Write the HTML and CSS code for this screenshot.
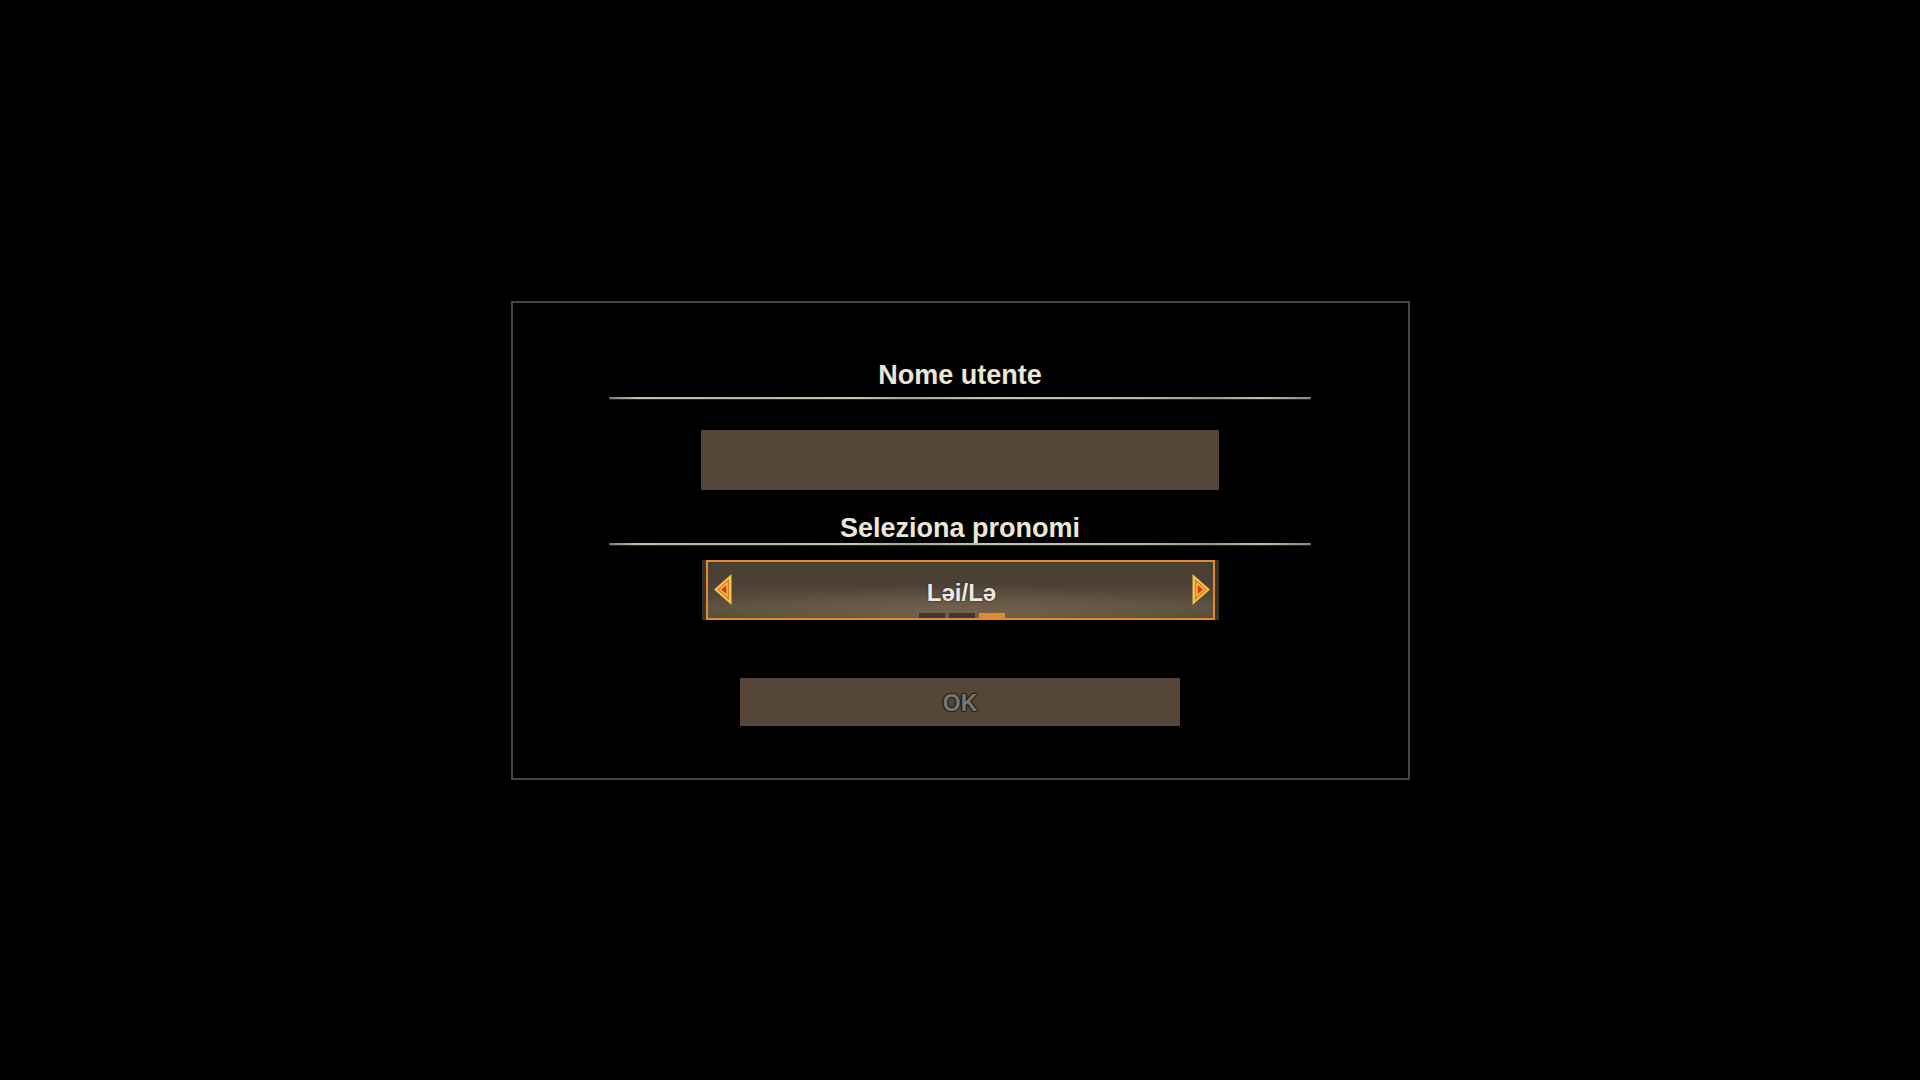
FILE: index.html
```html
<!DOCTYPE html>
<html lang="it">
<head>
<meta charset="utf-8">
<title>Nome utente</title>
<link rel="stylesheet" href="styles.css">
</head>
<body>
<main class="screen">
  <section class="panel">
    <h2 class="title title-name">Nome utente</h2>
    <div class="divider divider-name"></div>
    <div class="name-input" role="textbox" aria-label="Nome utente"></div>

    <h2 class="title title-pron">Seleziona pronomi</h2>
    <div class="divider divider-pron"></div>
    <div class="selector">
      <div class="selector-inner">
        <svg class="arrow" width="18" height="31" viewBox="0 0 18 31" aria-hidden="true">
          <polygon points="0,15.5 17.5,0 17.5,31" fill="#f2c348"/>
          <polygon points="3.2,15.5 15,5 15,26" fill="#e8742a"/>
          <polygon points="6,15.5 13,9.5 13,21.5" fill="#d63c18" stroke="#f5c850" stroke-width="1.3"/>
        </svg>
        <div class="selector-center">
          <span class="selector-label">Ləi/Lə</span>
          <div class="pager">
            <span class="pager-dot"></span>
            <span class="pager-dot"></span>
            <span class="pager-dot is-active"></span>
          </div>
        </div>
        <svg class="arrow" width="18" height="31" viewBox="0 0 18 31" aria-hidden="true">
          <polygon points="18,15.5 0.5,0 0.5,31" fill="#f2c348"/>
          <polygon points="14.8,15.5 3,5 3,26" fill="#e8742a"/>
          <polygon points="12,15.5 5,9.5 5,21.5" fill="#d63c18" stroke="#f5c850" stroke-width="1.3"/>
        </svg>
      </div>
    </div>

    <button class="ok-button" type="button">OK</button>
  </section>
</main>
</body>
</html>
```
FILE: styles.css
```css
html, body {
  margin: 0;
  padding: 0;
  background: #000;
}

body {
  font-family: "Liberation Sans", Arial, sans-serif;
}

.screen {
  width: 1920px;
  height: 1080px;
  display: flex;
  align-items: center;
  justify-content: center;
}

.panel {
  box-sizing: border-box;
  width: 899px;
  height: 479px;
  border: 2px solid #4a453a;
  background: #000;
  display: flex;
  flex-direction: column;
  align-items: center;
  padding: 58px 0 52px;
}

.title {
  margin: 0;
  font-size: 27px;
  line-height: 28px;
  font-weight: 700;
  color: #ebe7d8;
  text-align: center;
  text-shadow: 0 0 2px rgba(0, 0, 0, 0.8);
}

.divider {
  width: 702px;
  height: 2px;
  background: linear-gradient(90deg, #7f7c70 0%, #c4c0ad 4%, #b9b5a2 20%, #cbc7b3 35%, #a9a594 42%, #c8c4b1 55%, #bcb8a5 75%, #9e9a8a 86%, #c3bfac 93%, #87847a 100%);
  border-radius: 1px;
  box-shadow: 0 1px 1px rgba(120, 115, 100, 0.35);
}

.divider-name {
  margin-top: 8px;
}

.divider-pron {
  margin-top: 1px;
}

.name-input {
  margin-top: 31px;
  width: 518px;
  height: 60px;
  background: #554637;
}

.title-pron {
  margin-top: 24px;
}

.selector {
  box-sizing: border-box;
  margin-top: 15px;
  width: 517px;
  height: 60px;
  padding: 0 4px 0 4px;
  background: #3a3128;
}

.selector-inner {
  box-sizing: border-box;
  height: 100%;
  border: 2px solid #e38a2e;
  background:
    radial-gradient(ellipse 60% 55% at 50% 95%, rgba(140, 120, 95, 0.5), rgba(140, 120, 95, 0) 100%),
    linear-gradient(180deg, #483e32 0%, #4c4134 40%, #5d503f 80%, #56493a 100%);
  display: grid;
  grid-template-columns: auto 1fr auto;
  align-items: center;
  padding: 0 3px 0 6px;
}

.arrow {
  display: block;
}

.selector-center {
  align-self: stretch;
  display: flex;
  flex-direction: column;
  align-items: center;
  justify-content: flex-end;
}

.selector-label {
  font-size: 24px;
  line-height: 24px;
  font-weight: 700;
  color: #ede9e0;
  text-shadow: 0 0 2px rgba(0, 0, 0, 0.7);
}

.pager {
  display: flex;
  gap: 4px;
  margin-top: 8px;
}

.pager-dot {
  width: 26px;
  height: 5px;
  background: #393836;
}

.pager-dot.is-active {
  background: #e08a32;
}

.ok-button {
  margin-top: 58px;
  width: 440px;
  height: 48px;
  border: 0;
  padding: 4px 0 0;
  background: #554638;
  font-family: "Liberation Sans", Arial, sans-serif;
  font-size: 23px;
  font-weight: 700;
  color: #7b776d;
  text-shadow: 0 0 1px #1e1b17, 1px 0 1px #1e1b17, -1px 0 1px #1e1b17, 0 1px 1px #1e1b17, 0 -1px 1px #1e1b17;
  display: flex;
  align-items: center;
  justify-content: center;
  box-sizing: border-box;
}
```
